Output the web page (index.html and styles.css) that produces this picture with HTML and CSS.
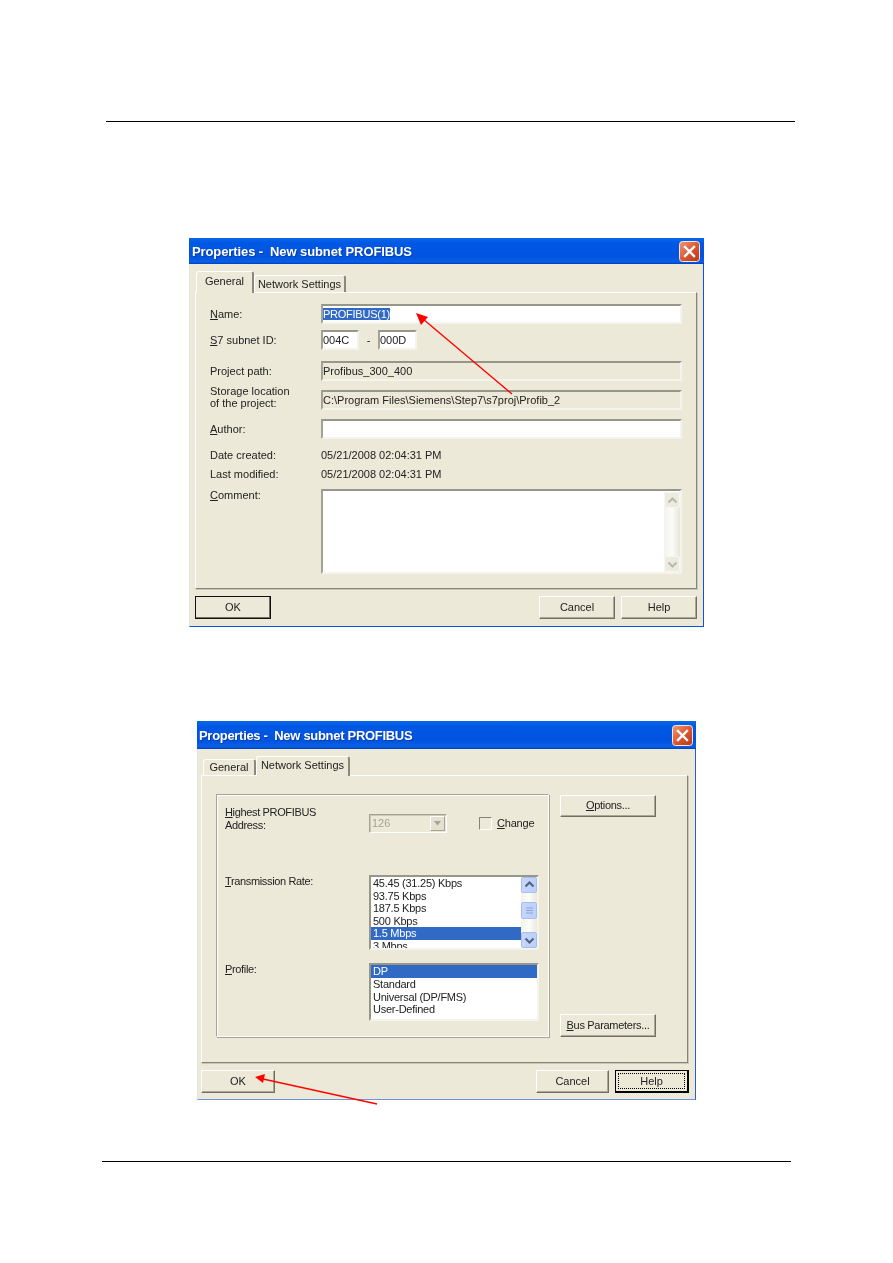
FILE: index.html
```html
<!DOCTYPE html>
<html lang="en">
<head>
<meta charset="utf-8">
<title>Properties - New subnet PROFIBUS</title>
<link rel="stylesheet" href="styles.css">
</head>
<body>
<div class="page">
  <div class="rule rule-top"></div>

  <section class="dialog dialog-a">
    <header class="titlebar titlebar-a">
      <span class="title">Properties -&nbsp; New subnet PROFIBUS</span>
      <svg class="close" width="21" height="21" viewBox="0 0 21 21"><defs><linearGradient id="ca" x1="0" y1="0" x2="1" y2="1"><stop offset="0" stop-color="#ee9a7c"/><stop offset=".55" stop-color="#d9532c"/><stop offset="1" stop-color="#b8391a"/></linearGradient></defs><rect x=".5" y=".5" width="20" height="20" rx="3" fill="url(#ca)" stroke="#f2e8e2"/><path d="M6 6l9 9M15 6l-9 9" stroke="#fff" stroke-width="2.4" stroke-linecap="square"/></svg>
    </header>
    <div class="tabs tabs-a">
      <div class="tab active tab-a1">General</div>
      <div class="tab tab-a2">Network Settings</div>
    </div>
    <div class="panel panel-a">
      <div class="row"><label class="label"><u>N</u>ame:</label><div class="field"><span class="selected">PROFIBUS(1)</span></div></div>
      <div class="row mt6"><label class="label"><u>S</u>7 subnet ID:</label><div class="field short">004C</div><span class="dash">-</span><div class="field short wide">000D</div></div>
      <div class="row mt11"><label class="label">Project path:</label><div class="field readonly">Profibus_300_400</div></div>
      <div class="row mt9"><label class="label two-line">Storage location<br>of the project:</label><div class="field readonly">C:\Program Files\Siemens\Step7\s7proj\Profib_2</div></div>
      <div class="row mt9"><label class="label"><u>A</u>uthor:</label><div class="field"></div></div>
      <div class="row info mt7"><label class="label">Date created:</label><span>05/21/2008 02:04:31 PM</span></div>
      <div class="row info mt1"><label class="label">Last modified:</label><span>05/21/2008 02:04:31 PM</span></div>
      <div class="row comment-row mt6"><label class="label"><u>C</u>omment:</label>
        <div class="field comment">
          <div class="scroll-off">
            <div class="off-btn"><svg width="11" height="7" viewBox="0 0 11 7"><path d="M1.5 5.5l4-4 4 4" fill="none" stroke="#b9b8ac" stroke-width="2"/></svg></div>
            <div class="off-btn"><svg width="11" height="7" viewBox="0 0 11 7"><path d="M1.5 1.5l4 4 4-4" fill="none" stroke="#b9b8ac" stroke-width="2"/></svg></div>
          </div>
        </div>
      </div>
    </div>
    <footer class="actions actions-a">
      <div class="btn btn-a default">OK</div>
      <div class="btn-group"><div class="btn btn-a">Cancel</div><div class="btn btn-a">Help</div></div>
    </footer>
  </section>

  <section class="dialog dialog-b">
    <header class="titlebar titlebar-b">
      <span class="title">Properties -&nbsp; New subnet PROFIBUS</span>
      <svg class="close" width="21" height="21" viewBox="0 0 21 21"><defs><linearGradient id="cb" x1="0" y1="0" x2="1" y2="1"><stop offset="0" stop-color="#ee9a7c"/><stop offset=".55" stop-color="#d9532c"/><stop offset="1" stop-color="#b8391a"/></linearGradient></defs><rect x=".5" y=".5" width="20" height="20" rx="3" fill="url(#cb)" stroke="#f2e8e2"/><path d="M6 6l9 9M15 6l-9 9" stroke="#fff" stroke-width="2.4" stroke-linecap="square"/></svg>
    </header>
    <div class="tabs tabs-b">
      <div class="tab tab-b1">General</div>
      <div class="tab active tab-b2">Network Settings</div>
    </div>
    <div class="panel panel-b">
      <div class="group">
        <div class="group-row first">
          <label class="label"><u>H</u>ighest PROFIBUS<br>Address:</label>
          <div class="address">
            <div class="combo"><span>126</span><span class="combo-btn"><svg width="9" height="5" viewBox="0 0 9 5"><path d="M1 0h7L4.500 4.500z" fill="#a5a497"/></svg></span></div>
            <div class="check"><span class="box"></span><span><u>C</u>hange</span></div>
          </div>
        </div>
        <div class="group-row rate">
          <label class="label"><u>T</u>ransmission Rate:</label>
          <div class="listbox rate-list">
            <div class="items">
              <div>45.45 (31.25) Kbps</div>
              <div>93.75 Kbps</div>
              <div>187.5 Kbps</div>
              <div>500 Kbps</div>
              <div class="on">1.5 Mbps</div>
              <div>3 Mbps</div>
            </div>
            <div class="scrollbar">
              <div class="sb-btn"><svg width="11" height="7" viewBox="0 0 11 7"><path d="M1.500 5.500l4-4 4 4" fill="none" stroke="#4d6185" stroke-width="2"/></svg></div>
              <div class="sb-thumb"><svg width="7" height="7" viewBox="0 0 7 7"><path d="M0 1h7M0 3.500h7M0 6h7" stroke="#8aa3dc"/></svg></div>
              <div class="sb-btn"><svg width="11" height="7" viewBox="0 0 11 7"><path d="M1.500 1.500l4 4 4-4" fill="none" stroke="#4d6185" stroke-width="2"/></svg></div>
            </div>
          </div>
        </div>
        <div class="group-row profile">
          <label class="label"><u>P</u>rofile:</label>
          <div class="listbox profile-list">
            <div class="items">
              <div class="on">DP</div>
              <div>Standard</div>
              <div>Universal (DP/FMS)</div>
              <div>User-Defined</div>
            </div>
          </div>
        </div>
      </div>
      <div class="side">
        <div class="btn btn-side"><span><u>O</u>ptions...</span></div>
        <div class="btn btn-side bus"><span><u>B</u>us Parameters...</span></div>
      </div>
    </div>
    <footer class="actions actions-b">
      <div class="btn btn-b">OK</div>
      <div class="btn-group"><div class="btn btn-b narrow">Cancel</div><div class="btn btn-b focus"><span class="focus-ring">Help</span></div></div>
    </footer>
  </section>

  <div class="rule rule-bottom"></div>

  <svg class="arrows" width="893" height="1263" viewBox="0 0 893 1263">
    <path d="M512 394L423 319" stroke="#f00" stroke-width="1.300" fill="none"/>
    <path d="M416 313L428 317 421 325z" fill="#f00"/>
    <path d="M377 1104L263 1079" stroke="#f00" stroke-width="1.300" fill="none"/>
    <path d="M255 1077L265 1074 263 1083z" fill="#f00"/>
  </svg>
</div>
</body>
</html>
```

FILE: styles.css
```css
* { box-sizing: border-box; }
html, body { margin: 0; padding: 0; background: #fff; }
.page {
  position: relative;
  width: 893px;
  height: 1263px;
  overflow: hidden;
  display: flex;
  flex-direction: column;
  align-items: flex-start;
  font: 11px/13px "Liberation Sans", Arial, sans-serif;
  color: #222;
}
.rule { width: 689px; height: 1px; background: #000; flex: none; }
.rule-top { margin: 121px 0 0 106px; }
.rule-bottom { margin: 61px 0 0 102px; }

.dialog {
  flex: none;
  display: flex;
  flex-direction: column;
  background: #ece9d8;
  border: solid #0a55d8;
  border-width: 0 1px 1px;
  border-left-color: #e4e3dc;
}
.dialog-a { width: 515px; height: 389px; margin: 116px 0 0 189px; padding: 0 6px 0 5px; filter: blur(.35px); }
.dialog-b { width: 499px; height: 379px; margin: 94px 0 0 197px; padding: 0 7px 0 3px; border-color: #6f93d8 #2a5fc8 #6f93d8 #e4e3dc; filter: blur(.2px); }

.titlebar {
  display: flex;
  align-items: center;
  justify-content: space-between;
  color: #fff;
  background: linear-gradient(#0a68ea 0%, #0058e4 18%, #0053df 70%, #0a5fe6 92%, #0040b8 100%);
}
.titlebar-a { height: 26px; margin: 0 -7px 0 -6px; padding: 0 4px 0 3px; }
.titlebar-b { height: 28px; margin: 0 -8px 0 -4px; padding: 0 3px 0 2px; }
.title { font-size: 13px; font-weight: bold; white-space: nowrap; text-shadow: 1px 1px 0 #0a3fa8; }
.titlebar-a .title { letter-spacing: -.1px; }
.titlebar-b .title { letter-spacing: -.3px; }

.tabs { display: flex; align-items: flex-end; flex: none; position: relative; z-index: 1; }
.tabs-a { margin-top: 7px; height: 21px; padding-left: 1px; }
.tabs-b { margin-top: 7px; height: 19px; padding-left: 2px; }
.tab {
  display: flex;
  align-items: center;
  justify-content: center;
  border: solid #fff;
  border-width: 1px 1px 0;
  border-right: 2px solid #8a897c;
  border-radius: 3px 3px 0 0;
  background: #ece9d8;
}
.tab.active { margin-bottom: -1px; }
.tab-a1 { width: 58px; height: 22px; padding-bottom: 2px; }
.tab-a2 { width: 92px; height: 17px; }
.tab-b1 { width: 53px; height: 16px; }
.tab-b2 { width: 94px; height: 20px; padding-bottom: 3px; }

.panel {
  flex: none;
  border: 1px solid;
  border-color: #fff #85847a #85847a #fff;
  box-shadow: 1px 1px 0 #c9c7b6;
}
.panel-a { height: 297px; padding: 11px 14px 0 14px; display: flex; flex-direction: column; }
.panel-b { height: 288px; padding: 18px 0 0 14px; display: flex; align-items: stretch; }

.row { display: flex; align-items: center; height: 20px; flex: none; }
.row .label { width: 111px; flex: none; }
.mt1 { margin-top: 1px; }
.mt6 { margin-top: 6px; }
.mt7 { margin-top: 7px; }
.mt9 { margin-top: 9px; }
.mt11 { margin-top: 11px; }
.two-line { margin-top: -6px; line-height: 12px; }
.info { height: 18px; }

.field {
  flex: 1;
  height: 20px;
  line-height: 17px;
  background: #fff;
  border: 2px solid;
  border-color: #97968a #f5f4ec #f5f4ec #a3a296;
  white-space: nowrap;
  overflow: hidden;
}
.field.readonly { background: #ece9d8; }
.field.short { flex: none; width: 38px; }
.field.short.wide { width: 39px; }
.dash { width: 19px; text-align: center; }
.selected { background: #316ac5; color: #fff; letter-spacing: -.25px; }

.comment-row { height: 85px; align-items: flex-start; }
.comment { height: 85px; position: relative; }
.scroll-off {
  position: absolute;
  top: 1px;
  right: 0;
  bottom: 0;
  width: 16px;
  display: flex;
  flex-direction: column;
  justify-content: space-between;
  background: linear-gradient(90deg, #f3f2ec, #fbfbf8 50%, #e8e6da);
}
.off-btn {
  height: 16px;
  display: flex;
  align-items: center;
  justify-content: center;
  background: #edebe0;
  border: 1px solid #f8f8f2;
  border-radius: 2px;
}

.actions { display: flex; justify-content: space-between; margin-top: 7px; flex: none; }
.btn-group { display: flex; gap: 6px; }
.btn {
  display: flex;
  align-items: center;
  justify-content: center;
  padding-bottom: 1px;
  background: #ece9d8;
  border: 1px solid;
  border-color: #fff #716f64 #716f64 #fff;
  box-shadow: inset -1px -1px 0 #aca899;
}
.btn-a { width: 76px; height: 23px; }
.btn-b { width: 74px; height: 23px; }
.btn-b.narrow { width: 73px; }
.actions-b { margin-right: -1px; }
.default { border-color: #111; box-shadow: inset -1px -1px 0 #716f64; }
.focus { border-color: #000; border-width: 1px 2px 2px 1px; box-shadow: none; padding: 2px; }
.focus-ring {
  width: 100%;
  height: 100%;
  display: flex;
  align-items: center;
  justify-content: center;
  border: 1px dotted #000;
}

.group {
  width: 333px;
  height: 243px;
  flex: none;
  padding: 11px 0 0 8px;
  border: 1px solid;
  border-color: #a4a394 #fff #fff #a4a394;
  box-shadow: 1px 1px 0 #a4a394, inset 1px 1px 0 #fff;
}
.group .label { letter-spacing: -.35px; }
.group-row { display: grid; grid-template-columns: 144px 170px; align-items: start; }
.group-row.first { height: 27px; }
.group-row.rate { margin-top: 42px; }
.group-row.profile { margin-top: 13px; }
.address { display: flex; align-items: flex-end; height: 27px; }
.combo {
  width: 78px;
  height: 19px;
  display: flex;
  align-items: center;
  justify-content: space-between;
  color: #a5a497;
  padding: 0 1px 0 2px;
  border: 1px solid;
  border-color: #a4a394 #fff #fff #a4a394;
  box-shadow: inset 1px 1px 0 #ccc9b8;
}
.combo-btn {
  width: 15px;
  height: 15px;
  display: flex;
  align-items: center;
  justify-content: center;
  background: #e4e1d0;
  border: 1px solid;
  border-color: #fff #a4a394 #a4a394 #fff;
}
.check { display: flex; align-items: center; gap: 5px; margin: 0 0 3px 32px; color: #222; letter-spacing: -.2px; }
.box {
  width: 13px;
  height: 13px;
  background: #ece9d8;
  border: 1px solid;
  border-color: #85857a #fff #fff #85857a;
}

.listbox {
  display: flex;
  background: #fff;
  border: 2px solid;
  border-color: #97968a #f5f4ec #f5f4ec #97968a;
  overflow: hidden;
}
.rate-list { height: 75px; }
.profile-list { height: 58px; }
.items { flex: 1; min-width: 0; letter-spacing: -.25px; }
.items div { padding-left: 2px; white-space: nowrap; }
.rate-list .items div { height: 12.6px; line-height: 12.6px; }
.profile-list .items div { height: 12.8px; line-height: 12.8px; }
.items .on { background: #316ac5; color: #fff; }
.scrollbar {
  width: 16px;
  flex: none;
  display: flex;
  flex-direction: column;
  align-items: center;
  background: linear-gradient(90deg, #f3f2ec, #fdfdfa 50%, #ebe9dd);
}
.sb-btn, .sb-thumb {
  width: 16px;
  display: flex;
  align-items: center;
  justify-content: center;
  background: linear-gradient(90deg, #c7d6fb, #bcd0fa);
  border: 1px solid #a6bdf0;
  border-radius: 2px;
}
.sb-btn { height: 16px; }
.sb-thumb { height: 18px; margin: 9px 0 13px; }

.side {
  margin-left: 11px;
  width: 96px;
  height: 243px;
  display: flex;
  flex-direction: column;
  justify-content: space-between;
  padding-top: 1px;
  flex: none;
}
.btn-side { height: 22px; flex: none; letter-spacing: -.3px; }
.btn-side.bus { height: 23px; }

.arrows { position: absolute; top: 0; left: 0; pointer-events: none; }
```
